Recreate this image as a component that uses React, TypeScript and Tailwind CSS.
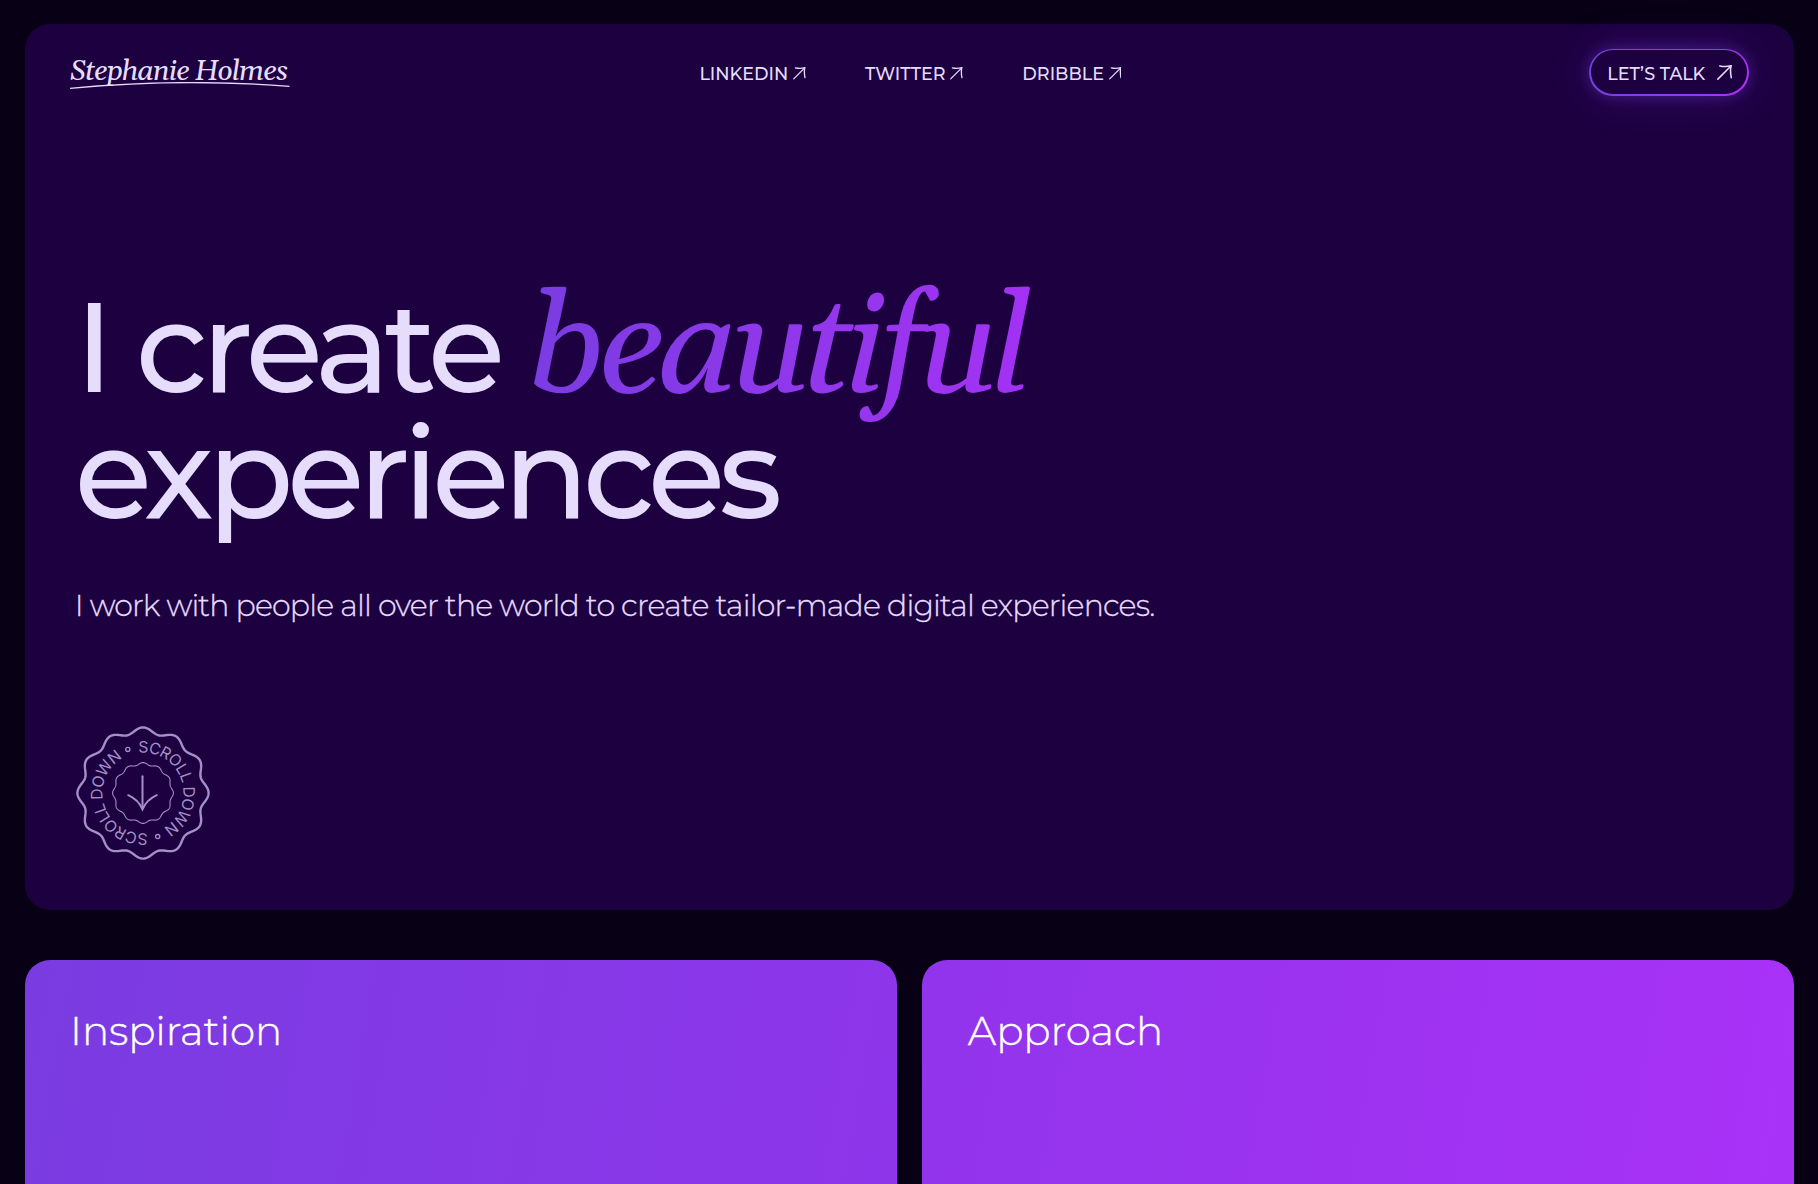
import React from 'react';

function wavyPath(cx: number, cy: number, base: number, amp: number) {
  const pts: string[] = [];
  for (let i = 0; i < 360; i += 1) {
    const a = (i * Math.PI) / 180;
    const r = base + amp * Math.cos(12 * a);
    pts.push(`${(cx + r * Math.sin(a)).toFixed(2)} ${(cy - r * Math.cos(a)).toFixed(2)}`);
  }
  return `M${pts.join('L')}Z`;
}

function ArrowUpRight({ size }: { size: number }) {
  return (
    <svg width={size} height={size} viewBox="0 0 14 14" fill="none" stroke="currentColor" strokeWidth={1.45} strokeLinecap="round">
      <path d="M0.8 13.2L13 1" />
      <path d="M2.6 0.9C6 1.7 9.6 1.6 13.1 0.8C12.4 4.4 12.5 8 13.3 11.8" />
    </svg>
  );
}

function NavLink({ label }: { label: string }) {
  return (
    <a className="flex items-center gap-[4.6px]">
      <span className="pt-px">{label}</span>
      <ArrowUpRight size={12.6} />
    </a>
  );
}

function ScrollBadge() {
  const textClass = "font-['Inter'] text-[15.8px] font-normal";
  return (
    <svg width={136} height={136} viewBox="0 0 136 136" className="text-[#a48fc9]" fill="none" stroke="currentColor">
      <defs>
        <path id="ring-a" d="M68 27.5A40.5 40.5 0 0 1 68 108.5" />
        <path id="ring-b" d="M68 108.5A40.5 40.5 0 0 1 68 27.5" />
      </defs>
      <path d={wavyPath(68, 68, 62.7, 2.9)} strokeWidth={2.4} />
      <path d={wavyPath(68, 68, 29.3, 1.1)} strokeWidth={1.1} />
      <g fill="currentColor" stroke="none">
        <text className={textClass} transform="rotate(-6.5 68 68)">
          <textPath href="#ring-a" textLength={110.5} startOffset={0}>SCROLL DOWN</textPath>
        </text>
        <text className={textClass} transform="rotate(-6.5 68 68)">
          <textPath href="#ring-b" textLength={110.5} startOffset={0}>SCROLL DOWN</textPath>
        </text>
      </g>
      <circle cx={82.7} cy={111.6} r={2.1} strokeWidth={1.3} />
      <circle cx={52.8} cy={24.4} r={2.1} strokeWidth={1.3} />
      <g strokeWidth={2} strokeLinecap="round">
        <path d="M67.5 51.3V83.5" />
        <path d="M53.2 70.2C59.5 73 64.5 77.5 67.5 84.3C70.5 77.5 75.5 73 81.8 70.2" />
      </g>
    </svg>
  );
}

export default function App() {
  return (
    <div className="h-screen overflow-hidden bg-[#080014] pl-[24.6px] pr-[24px] pt-[23.8px] font-['Montserrat','Inter',sans-serif] text-[#e6dcfc]">
      <section className="flex h-[885.9px] flex-col rounded-[25px] bg-[#1c0040] px-[45.2px] pt-[25.2px]">
        <header className="grid h-[47px] grid-cols-3 items-center text-[17.6px] font-medium leading-[22px]">
          <div className="relative w-[220px]">
            <span className="block whitespace-nowrap font-['Gelasio','Liberation_Serif',serif] text-[29px] font-normal italic leading-[34px] tracking-[-1.12px]">Stephanie Holmes</span>
            <svg className="absolute left-0 top-[27px]" width={221} height={8} viewBox="0 0 221 8" fill="none" stroke="currentColor" strokeWidth={1.3}>
              <path d="M0 6.3Q110 -4 219.5 4.3" />
            </svg>
          </div>
          <nav className="flex items-center justify-center gap-[59.5px] pl-[2px] pt-[2px]">
            <NavLink label="LINKEDIN" />
            <NavLink label="TWITTER" />
            <NavLink label="DRIBBLE" />
          </nav>
          <div className="flex justify-end">
            <button className="rounded-full bg-linear-to-r from-[#7440dc] to-[#a832f0] p-[1.5px] shadow-[0_0_14px_rgba(122,60,226,0.35),0_0_40px_rgba(122,60,226,0.25)]">
              <span className="flex h-[44px] w-[156.5px] items-center justify-between rounded-full bg-[#1c0040] pl-[16.5px] pr-[15px]">
                <span className="pt-[3px] tracking-[-0.07px]">LET’S TALK</span>
                <ArrowUpRight size={15} />
              </span>
            </button>
          </div>
        </header>
        <div className="mt-[188.5px] flex flex-col pl-[5px]">
          <h1 className="text-[126px] font-medium leading-[126px] tracking-[-6.05px]">
            I create{' '}
            <em className="-my-[20px] inline-block origin-[0_112px] -skew-x-3 bg-linear-to-r from-[#7a3ce2] to-[#a431f4] bg-clip-text py-[20px] pr-4 font-['Gelasio','Liberation_Serif',serif] text-[139.5px] font-normal leading-[100px] tracking-[-7.1px] text-transparent">beautiful</em>
            <br />
            experiences
          </h1>
          <p className="mt-[51.5px] text-[30px] font-light leading-[36px] tracking-[-0.81px] [-webkit-text-stroke:0.3px_#e6dcfc]">
            I work with people all over the world to create tailor-made digital experiences.
          </p>
          <div className="mt-[101px]">
            <ScrollBadge />
          </div>
        </div>
      </section>
      <section className="mt-[50.6px] grid h-[400px] grid-cols-2 gap-[25px] text-[40.4px] font-light leading-[48px] tracking-[-0.1px] text-white [-webkit-text-stroke:0.4px_white]">
        <div className="rounded-[25px] bg-linear-[100deg] from-[#7a3ce1] to-[#8f35eb] px-[45.5px] pt-[47px]">Inspiration</div>
        <div className="rounded-[25px] bg-linear-[100deg] from-[#9134eb] to-[#aa32f8] px-[46px] pt-[47px]">Approach</div>
      </section>
    </div>
  );
}
